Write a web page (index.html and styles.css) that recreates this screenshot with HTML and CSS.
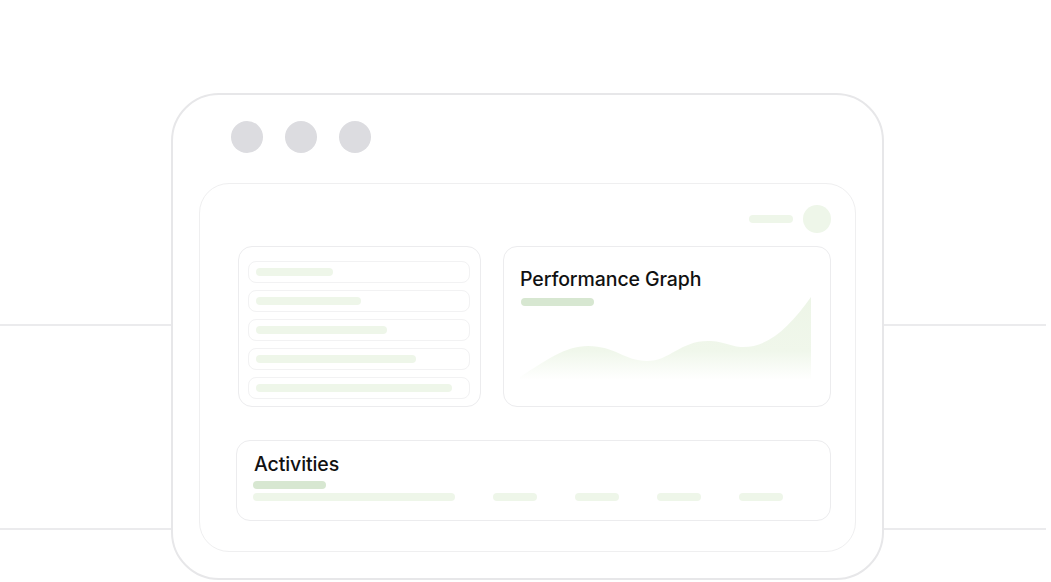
FILE: index.html
```html
<!DOCTYPE html>
<html lang="en">
<head>
<meta charset="utf-8">
<title>Dashboard preview</title>
<link rel="stylesheet" href="styles.css">
</head>
<body>
<div class="stage">
  <div class="side side-left"><div class="hline"></div><div class="hline"></div></div>
  <div class="frame">
    <div class="dots"><span class="dot"></span><span class="dot"></span><span class="dot"></span></div>
    <div class="panel">
      <div class="topbar"><span class="pill-sm"></span><span class="avatar"></span></div>
      <div class="cards">
        <div class="card list-card">
          <div class="row"><span class="bar" style="width:77px"></span></div>
          <div class="row"><span class="bar" style="width:105px"></span></div>
          <div class="row"><span class="bar" style="width:131px"></span></div>
          <div class="row"><span class="bar" style="width:160px"></span></div>
          <div class="row"><span class="bar" style="width:196px"></span></div>
        </div>
        <div class="card graph-card">
          <h2 class="title">Performance Graph</h2>
          <span class="accent"></span>
          <svg class="graph" width="291" height="84" viewBox="0 0 291 84">
            <defs>
              <linearGradient id="g" x1="0" y1="0" x2="0" y2="1">
                <stop offset="0" stop-color="#edf5e7"/>
                <stop offset="0.65" stop-color="#f0f7eb"/>
                <stop offset="1" stop-color="#ffffff"/>
              </linearGradient>
            </defs>
            <path d="M0,81 C25,65 45,50 68,50 C95,50 105,65 127,65 C150,65 160,45 188,45 C205,45 210,51 223,51 C250,51 270,30 291,1 L291,84 L0,84 Z" fill="url(#g)"/>
          </svg>
        </div>
      </div>
      <div class="card activity-card">
        <h2 class="title">Activities</h2>
        <span class="accent"></span>
        <div class="act-row">
          <span class="bar long"></span>
          <span class="bar short"></span>
          <span class="bar short"></span>
          <span class="bar short"></span>
          <span class="bar short"></span>
        </div>
      </div>
    </div>
  </div>
  <div class="side side-right"><div class="hline"></div><div class="hline"></div></div>
</div>
</body>
</html>
```

FILE: styles.css
```css
* { box-sizing: border-box; }
html, body { margin: 0; background: #ffffff; }
body { font-family: Inter, "Noto Sans", sans-serif; color: #111; }

.stage {
  display: flex;
  padding-top: 93px;
  width: 1051px;
}
.side {
  display: flex;
  flex-direction: column;
  padding-top: 231px;
}
.side-left { width: 171px; }
.side-right { width: 162px; }
.hline {
  height: 2px;
  background: #ebebed;
}
.hline + .hline { margin-top: 202px; }

.frame {
  width: 713px;
  height: 487px;
  border: 2px solid #e7e7e9;
  border-radius: 48px;
  padding: 26px;
  display: flex;
  flex-direction: column;
}
.dots {
  display: flex;
  gap: 22px;
  padding-left: 32px;
}
.dot {
  width: 32px;
  height: 32px;
  border-radius: 50%;
  background: #dcdce0;
}
.panel {
  margin-top: 30px;
  height: 369px;
  border: 1px solid #efeff0;
  border-radius: 30px;
  padding: 21px 24px 0 36px;
  display: flex;
  flex-direction: column;
}
.topbar {
  display: flex;
  justify-content: flex-end;
  align-items: center;
  gap: 10px;
}
.pill-sm {
  width: 44px;
  height: 8px;
  border-radius: 4px;
  background: #eef6e9;
}
.avatar {
  width: 28px;
  height: 28px;
  border-radius: 50%;
  background: #eef6e9;
}
.cards {
  display: flex;
  gap: 22px;
  margin-top: 13px;
  padding-left: 2px;
}
.card {
  border: 1px solid #ececee;
  border-radius: 14px;
  background: #fff;
}
.list-card {
  width: 243px;
  height: 161px;
  padding: 14px 10px 0 9px;
  display: flex;
  flex-direction: column;
  gap: 7px;
}
.row {
  height: 22px;
  border: 1px solid #f2f2f3;
  border-radius: 8px;
  display: flex;
  align-items: center;
  padding-left: 7px;
}
.bar {
  display: block;
  height: 8px;
  border-radius: 4px;
  background: #eef6e9;
}
.graph-card {
  width: 328px;
  height: 161px;
  padding: 20px 0 0 16px;
  display: flex;
  flex-direction: column;
}
.title {
  margin: 0;
  font-size: 19.5px;
  font-weight: 500;
  line-height: 24px;
  letter-spacing: -0.1px;
  color: #111;
}
.accent {
  display: block;
  width: 73px;
  height: 8px;
  border-radius: 4px;
  background: #d7e7d1;
}
.graph-card .accent { margin-top: 7px; margin-left: 1px; }
.graph { display: block; margin-top: -10px; }

.activity-card {
  margin-top: 33px;
  width: 595px;
  height: 81px;
  padding: 11px 0 0 16px;
}
.activity-card .title { margin-left: 1px; }
.activity-card .accent { margin-top: 5px; }
.act-row {
  display: flex;
  align-items: center;
  margin-top: 4px;
}
.act-row .long { width: 202px; }
.act-row .short { width: 44px; margin-left: 38px; }
```
